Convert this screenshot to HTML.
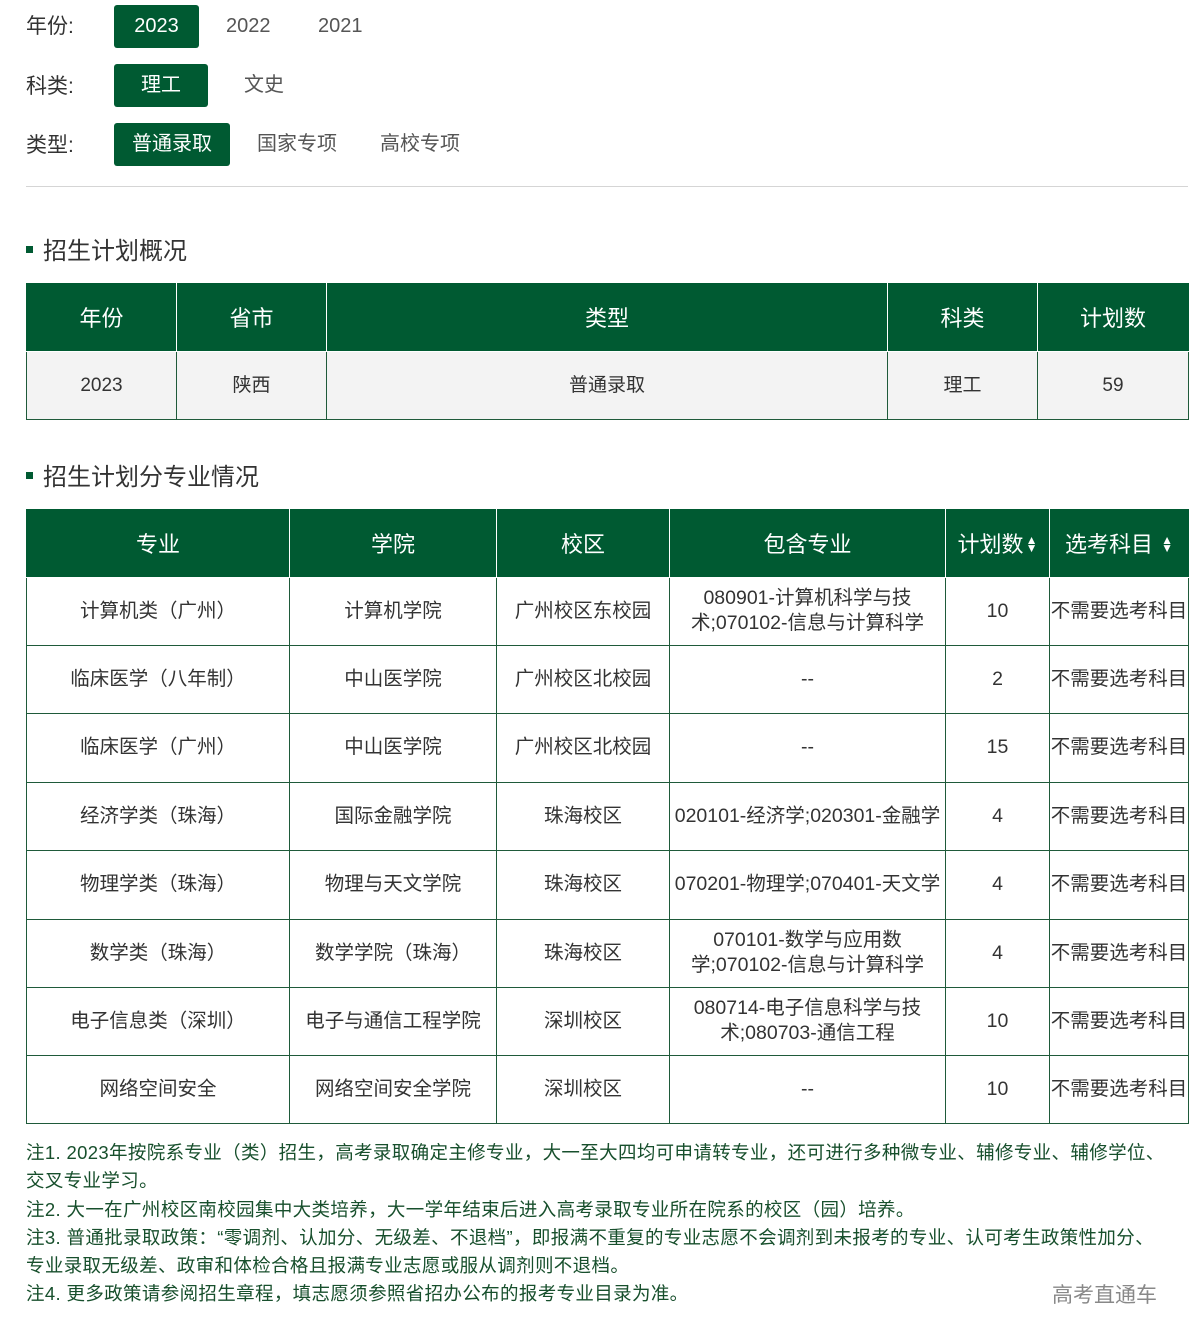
<!DOCTYPE html>
<html><head><meta charset="utf-8"><style>
*{margin:0;padding:0;box-sizing:border-box}
body{width:1189px;height:1332px;background:#fff;font-family:"Liberation Sans","Noto Sans CJK SC",sans-serif;color:#333;position:relative;overflow:hidden}
.abs{position:absolute}
.lbl{position:absolute;left:26px;font-size:21px;color:#333}
.btn{position:absolute;height:43px;border-radius:3px;background:#005a32;color:#fff;font-size:20px;line-height:43px;text-align:center}
.opt{position:absolute;font-size:20px;color:#555;line-height:43px}
.hr{position:absolute;left:26px;top:186px;width:1162px;height:1px;background:#d5d5d5}
.sec{position:absolute;left:26px;font-size:24px;color:#333}
.sec:before{content:"";display:inline-block;width:7px;height:7px;background:#005a32;margin-right:10px;vertical-align:middle;position:relative;top:-3px}
table{position:absolute;left:26px;border-collapse:collapse;table-layout:fixed}
th{background:#005a32;color:#fff;font-weight:normal;font-size:22px;border:1px solid #fff;border-top:none}
th:first-child{border-left:1px solid #005a32}
th:last-child{border-right:1px solid #005a32}
td{border:1px solid #1f5a3a;text-align:center;font-size:19.5px;color:#333;line-height:25px;white-space:nowrap;overflow:hidden}
.t1 td{background:#f3f3f3;font-size:19px}
.arr{display:inline-block;font-size:12px;line-height:8px;vertical-align:middle;margin-left:2px;position:relative;top:-2px}
.notes{position:absolute;left:26px;top:1139px;width:1170px;font-size:18.5px;line-height:28.3px;color:#174f2c;white-space:nowrap;letter-spacing:0.35px}
</style></head><body>
<div class="lbl" style="top:10px">年份:</div>
<div class="btn" style="left:114px;top:5px;width:85px">2023</div>
<div class="opt" style="left:226px;top:5px">2022</div>
<div class="opt" style="left:318px;top:5px">2021</div>
<div class="lbl" style="top:70px">科类:</div>
<div class="btn" style="left:114px;top:64px;width:94px">理工</div>
<div class="opt" style="left:244px;top:64px">文史</div>
<div class="lbl" style="top:129px">类型:</div>
<div class="btn" style="left:114px;top:123px;width:116px">普通录取</div>
<div class="opt" style="left:257px;top:123px">国家专项</div>
<div class="opt" style="left:380px;top:123px">高校专项</div>
<div class="hr"></div>
<div class="sec" style="top:231px">招生计划概况</div>
<table class="t1" style="top:283px;width:1162px">
<colgroup><col style="width:150px"><col style="width:150px"><col style="width:561px"><col style="width:150px"><col style="width:151px"></colgroup>
<tr style="height:68px"><th>年份</th><th>省市</th><th>类型</th><th>科类</th><th>计划数</th></tr>
<tr style="height:68px"><td>2023</td><td>陕西</td><td>普通录取</td><td>理工</td><td>59</td></tr>
</table>
<div class="sec" style="top:457px">招生计划分专业情况</div>
<table style="top:509px;width:1162px">
<colgroup><col style="width:263px"><col style="width:207px"><col style="width:173px"><col style="width:276px"><col style="width:104px"><col style="width:139px"></colgroup>
<tr style="height:68px"><th>专业</th><th>学院</th><th>校区</th><th>包含专业</th><th>计划数<span class="arr">▲<br>▼</span></th><th>选考科目 <span class="arr">▲<br>▼</span></th></tr>
<tr style="height:68px"><td>计算机类（广州）</td><td>计算机学院</td><td>广州校区东校园</td><td>080901-计算机科学与技<br>术;070102-信息与计算科学</td><td>10</td><td>不需要选考科目</td></tr>
<tr style="height:68px"><td>临床医学（八年制）</td><td>中山医学院</td><td>广州校区北校园</td><td>--</td><td>2</td><td>不需要选考科目</td></tr>
<tr style="height:69px"><td>临床医学（广州）</td><td>中山医学院</td><td>广州校区北校园</td><td>--</td><td>15</td><td>不需要选考科目</td></tr>
<tr style="height:68px"><td>经济学类（珠海）</td><td>国际金融学院</td><td>珠海校区</td><td>020101-经济学;020301-金融学</td><td>4</td><td>不需要选考科目</td></tr>
<tr style="height:69px"><td>物理学类（珠海）</td><td>物理与天文学院</td><td>珠海校区</td><td>070201-物理学;070401-天文学</td><td>4</td><td>不需要选考科目</td></tr>
<tr style="height:68px"><td>数学类（珠海）</td><td>数学学院（珠海）</td><td>珠海校区</td><td>070101-数学与应用数<br>学;070102-信息与计算科学</td><td>4</td><td>不需要选考科目</td></tr>
<tr style="height:68px"><td>电子信息类（深圳）</td><td>电子与通信工程学院</td><td>深圳校区</td><td>080714-电子信息科学与技<br>术;080703-通信工程</td><td>10</td><td>不需要选考科目</td></tr>
<tr style="height:68px"><td>网络空间安全</td><td>网络空间安全学院</td><td>深圳校区</td><td>--</td><td>10</td><td>不需要选考科目</td></tr>
</table>
<div class="notes">注1. 2023年按院系专业（类）招生，高考录取确定主修专业，大一至大四均可申请转专业，还可进行多种微专业、辅修专业、辅修学位、<br>交叉专业学习。<br>注2. 大一在广州校区南校园集中大类培养，大一学年结束后进入高考录取专业所在院系的校区（园）培养。<br>注3. 普通批录取政策：“零调剂、认加分、无级差、不退档”，即报满不重复的专业志愿不会调剂到未报考的专业、认可考生政策性加分、<br>专业录取无级差、政审和体检合格且报满专业志愿或服从调剂则不退档。<br>注4. 更多政策请参阅招生章程，填志愿须参照省招办公布的报考专业目录为准。</div>
<div class="abs" style="left:1052px;top:1279px;font-size:21px;color:#888">高考直通车</div>
</body></html>
